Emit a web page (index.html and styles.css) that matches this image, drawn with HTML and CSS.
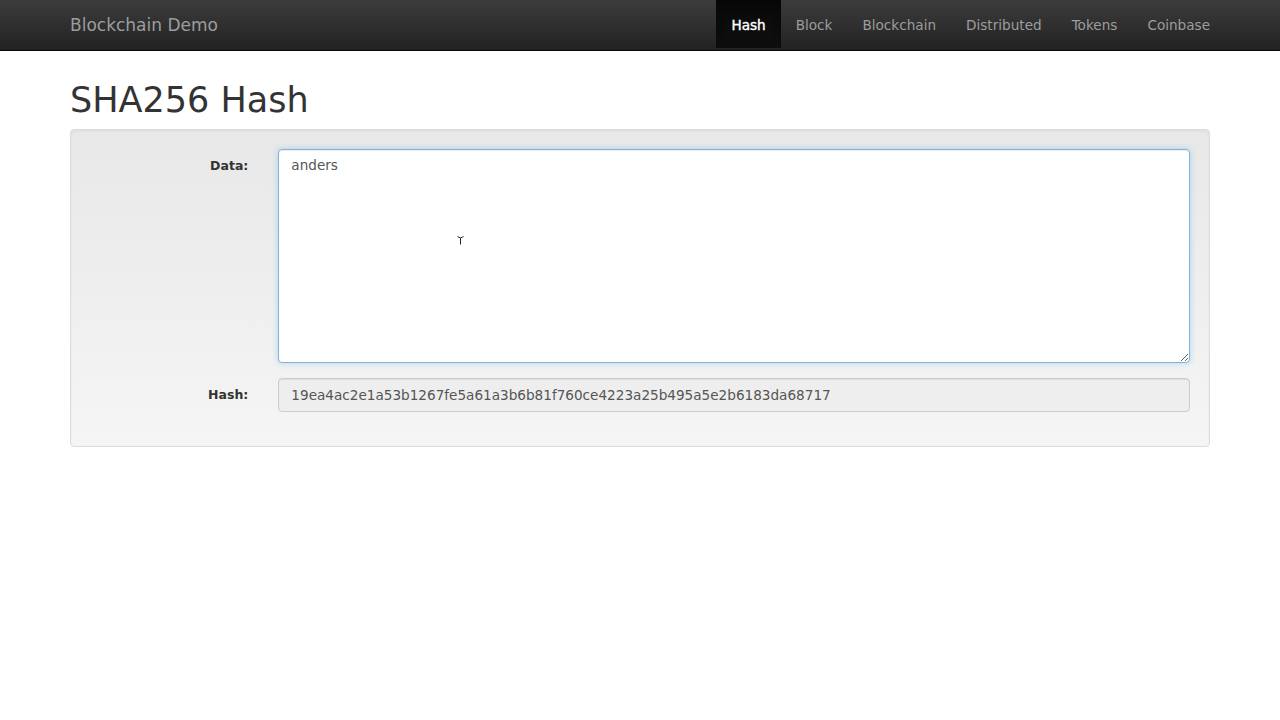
FILE: index.html
```html
<!DOCTYPE html>
<html>
<head>
<meta charset="utf-8">
<title>Blockchain Demo</title>
<link rel="stylesheet" href="styles.css">
</head>
<body>
<nav class="navbar">
  <div class="container nav-inner">
    <a class="brand" href="#">Blockchain Demo</a>
    <ul class="nav">
      <li class="active"><a href="#">Hash</a></li>
      <li><a href="#">Block</a></li>
      <li><a href="#">Blockchain</a></li>
      <li><a href="#">Distributed</a></li>
      <li><a href="#">Tokens</a></li>
      <li><a href="#">Coinbase</a></li>
    </ul>
  </div>
</nav>
<main class="container">
  <h1 class="title">SHA256 Hash</h1>
  <div class="well">
    <div class="form-group">
      <label class="label">Data:</label>
      <div class="field">
        <div class="textarea-wrap">
          <textarea class="control textarea" rows="10">anders</textarea>
          <svg class="cursor" width="7" height="9" viewBox="0 0 7 9"><path d="M0.5 0.5 L3.5 2 L6.5 0.5 M3.5 2 V8.5" fill="none" stroke="#222" stroke-width="1"/></svg>
        </div>
      </div>
    </div>
    <div class="form-group">
      <label class="label">Hash:</label>
      <div class="field">
        <input class="control input" type="text" disabled value="19ea4ac2e1a53b1267fe5a61a3b6b81f760ce4223a25b495a5e2b6183da68717">
      </div>
    </div>
  </div>
</main>
</body>
</html>
```

FILE: styles.css
```css
* { box-sizing: border-box; }
html, body { margin: 0; padding: 0; }
body {
  font-family: "DejaVu Sans", Verdana, sans-serif;
  font-size: 13px;
  line-height: 20px;
  color: #333;
  background: #fff;
}
.container {
  width: 1170px;
  margin: 0 auto;
  padding: 0 15px;
}
.navbar {
  height: 51px;
  background: linear-gradient(to bottom, #3c3c3c 0, #222 100%);
  border-bottom: 1px solid #080808;
}
.nav-inner {
  display: flex;
  justify-content: space-between;
  align-items: stretch;
  height: 50px;
}
.brand {
  color: #9d9d9d;
  font-size: 17px;
  line-height: 20px;
  padding: 15px 0;
  text-decoration: none;
}
.nav {
  display: flex;
  list-style: none;
  margin: 0 -15px 0 0;
  padding: 0;
}
.nav li a {
  display: block;
  padding: 15px 15px;
  line-height: 20px;
  font-size: 13.6px;
  color: #9d9d9d;
  text-decoration: none;
}
.nav li.active a {
  color: #fff;
  background: linear-gradient(to bottom, #080808 0, #0f0f0f 100%);
  box-shadow: inset 0 3px 9px rgba(0,0,0,.25);
  -webkit-text-stroke: 0.4px #fff;
  padding: 15px 15px;
  height: 48px;
}
.title {
  font-size: 35px;
  font-weight: 500;
  line-height: 40px;
  margin: 29px 0 9px;
}
.well {
  background: linear-gradient(to bottom, #e8e8e8 0, #f5f5f5 100%);
  border: 1px solid #dcdcdc;
  border-radius: 4px;
  padding: 19px;
  box-shadow: inset 0 1px 3px rgba(0,0,0,.05), 0 1px 0 rgba(255,255,255,.1);
}
.form-group {
  display: flex;
  margin: 0 -15px 15px;
}
.label {
  width: 16.6667%;
  padding: 7px 15px 0;
  text-align: right;
  font-weight: bold;
  font-size: 12.5px;
  color: #333;
}
.field {
  width: 83.3333%;
  padding: 0 15px;
}
.textarea-wrap { position: relative; }
.control {
  display: block;
  width: 100%;
  font-family: "DejaVu Sans", Verdana, sans-serif;
  font-size: 13.6px;
  line-height: 20px;
  color: #555;
  padding: 6px 12px;
  border: 1px solid #ccc;
  border-radius: 4px;
}
.textarea {
  height: 214px;
  resize: vertical;
  background: #fff;
  border-color: #7fb4df;
  outline: 0;
  box-shadow: inset 0 1px 1px rgba(0,0,0,.075), 0 0 6px rgba(102,175,233,.45);
  padding-top: 5px;
}
.input {
  height: 34px;
  background: #eee;
  box-shadow: inset 0 1px 1px rgba(0,0,0,.075);
}
.cursor {
  position: absolute;
  left: 179px;
  top: 87px;
}
```
